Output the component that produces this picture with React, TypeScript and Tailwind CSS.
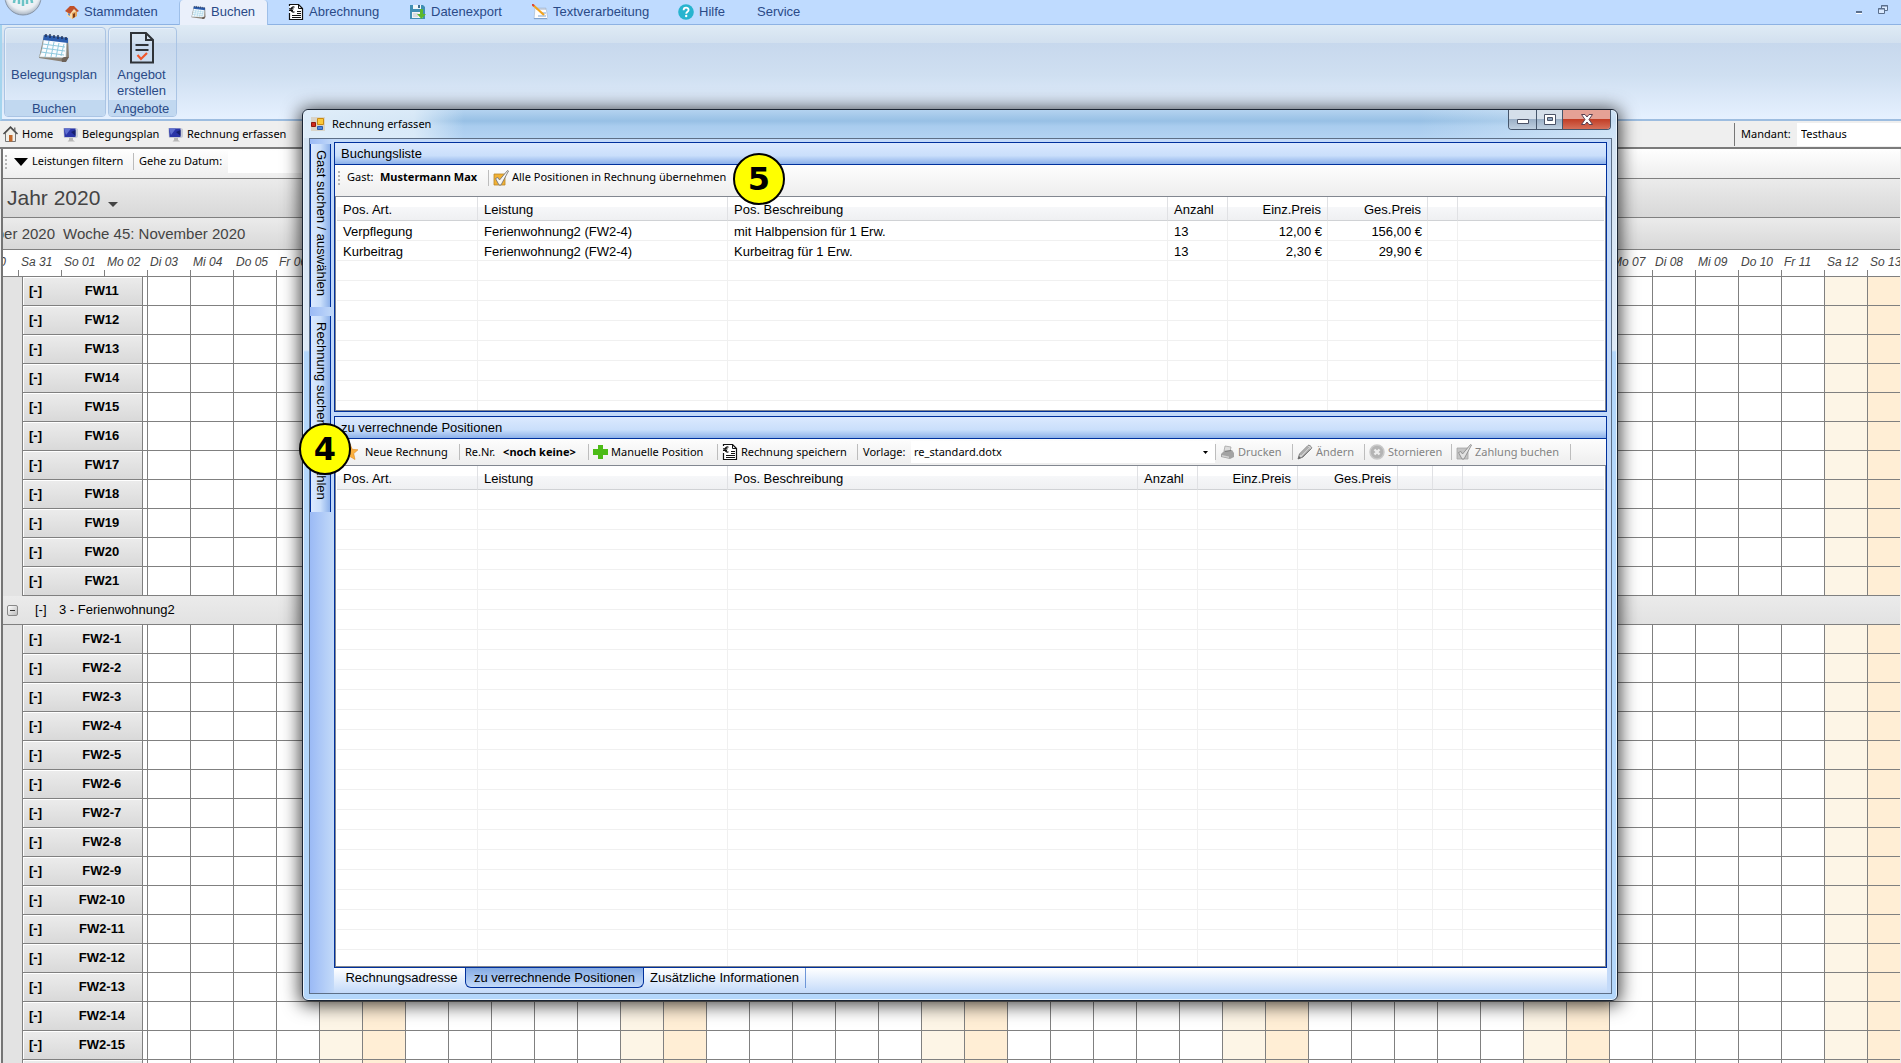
import { useState, type ReactNode } from 'react';

const arial = "font-['Liberation_Sans',Arial,sans-serif]";
const noto = "font-['Noto_Sans','Open_Sans',sans-serif]";

const weekdays = ['So', 'Mo', 'Di', 'Mi', 'Do', 'Fr', 'Sa'];

// the calendar shows every day from 31 October 2020 on
const days = Array.from({ length: 60 }, (_, i) => {
  const d = new Date(2020, 9, 31 + i);
  return { weekday: d.getDay(), label: `${weekdays[d.getDay()]} ${String(d.getDate()).padStart(2, '0')}` };
});

const rooms1 = Array.from({ length: 11 }, (_, i) => `FW${i + 11}`);
const rooms2 = Array.from({ length: 16 }, (_, i) => `FW2-${i + 1}`);

const bookings = [
  ['Verpflegung', 'Ferienwohnung2 (FW2-4)', 'mit Halbpension für 1 Erw.', '13', '12,00 €', '156,00 €'],
  ['Kurbeitrag', 'Ferienwohnung2 (FW2-4)', 'Kurbeitrag für 1 Erw.', '13', '2,30 €', '29,90 €'],
];

const headings = ['Pos. Art.', 'Leistung', 'Pos. Beschreibung', 'Anzahl', 'Einz.Preis', 'Ges.Preis'];

/* ---------- icons ---------- */

function HouseIcon() {
  return (
    <svg width="14" height="14" viewBox="0 0 14 14">
      <path d="M2 6l4-3 6 3v5l-5 3-5-3z" fill="#f6dcae" />
      <path d="M7 8l5-2v5l-5 3z" fill="#e5a35a" />
      <path d="M0 6l5-5 4 0 5 5-2 1-3-3-4 5z" fill="#c0502a" />
      <path d="M8 9l2-1v4l-2 1z" fill="#7c3d1c" />
      <path d="M3 8l2 1v2l-2-1z" fill="#6b8fc4" />
    </svg>
  );
}

function CalendarIcon({ size }: { size: number }) {
  return (
    <svg width={size} height={size} viewBox="0 0 32 32">
      <path d="M6 3l24 3 1 19-4 5-26-4z" fill="#8c8276" />
      <path d="M6 3l23 3-1 20-27-1C4 20 5 12 6 3z" fill="#fafcff" stroke="#9aa" strokeWidth=".6" />
      <path d="M6 3l24 3v5L5 8z" fill="#2d5fb0" />
      <path d="M24 30c-1-3 0-5 4-5l3 0-3 5z" fill="#6d6259" />
      <path d="M5 12l22 3M4 16l23 3M3 20l23 3M11 9L7 25M16 10l-3 15M21 11l-3 14M26 12l-3 12" stroke="#8fc9de" strokeWidth="1" fill="none" />
      <path d="M8 2v3M12 2v4M16 3v3M20 3v4M24 4v3M28 5v3" stroke="#1c2d55" strokeWidth="1.4" />
    </svg>
  );
}

function InvoiceIcon() {
  return (
    <svg width="16" height="16" viewBox="0 0 16 16" fill="none" stroke="#111">
      <path d="M1.500 9v6.500h13V4.500l-4-4H1.500V2" fill="#fff" strokeWidth="1.200" />
      <path d="M10.500.5v4h4M9 7.500h4M9 9.500h4M4 11.500h9M4 13.500h9" />
      <path d="M6.500 3.200C4.500 2.400 3 3.800 3 5.500s1.500 3.100 3.500 2.300M1 4.800h4.500M1 6.500h4" strokeWidth="1.200" />
    </svg>
  );
}

function ExportIcon() {
  return (
    <svg width="16" height="16" viewBox="0 0 16 16">
      <path d="M0 1h13l2 2v12H0z" fill="#3f8fb4" />
      <path d="M3 1h8v4H3z" fill="#eef6fa" />
      <path d="M8 1h2v3H8z" fill="#3f6f8f" />
      <path d="M2 8h11v6H2z" fill="#f3f3f3" />
      <path d="M3 10h5M3 12h5" stroke="#b9c7cf" />
      <path d="M10 5h3v5h3l-4.500 5L7 10h3z" fill="#5cb82c" />
    </svg>
  );
}

function WriteIcon() {
  return (
    <svg width="16" height="16" viewBox="0 0 16 16">
      <path d="M3 4h11l2 11H2z" fill="#fdfdfd" stroke="#a8bcd4" strokeWidth=".7" />
      <path d="M5 4v2M7 4v2M9 4v2M11 4v2M13 4v2" stroke="#8899b5" strokeWidth=".8" />
      <path d="M2 14.500h13M6 12h8M10 9h4" stroke="#7fa3cf" strokeWidth="1" />
      <path d="M1 1l11 10" stroke="#f2a31c" strokeWidth="2.200" />
      <path d="M0 0l2 2" stroke="#d8453a" strokeWidth="2" />
    </svg>
  );
}

function HelpIcon() {
  return (
    <svg width="16" height="16" viewBox="0 0 16 16">
      <circle cx="8" cy="8" r="7.800" fill="#27b4cf" />
      <path d="M5.600 6.200c0-3.400 5-3.200 5-.3 0 1.800-2.400 1.800-2.400 3.800" stroke="#fff" strokeWidth="1.800" fill="none" />
      <circle cx="8.200" cy="12" r="1.200" fill="#fff" />
    </svg>
  );
}

function OfferIcon() {
  return (
    <svg width="24" height="32" viewBox="0 0 24 32" fill="none" stroke="#2f3338" strokeWidth="2">
      <path d="M1 1h15l7 7v22.500H1z" />
      <path d="M16 1v7h7M5.500 13h13M5.500 18h13" />
      <path d="M7.500 23l3.500 4 6-6" stroke="#f0562a" strokeWidth="2.200" />
    </svg>
  );
}

function HomeIcon() {
  return (
    <svg width="15" height="16" viewBox="0 0 15 16">
      <path d="M2.500 7v8.500h10V7l-5-5z" fill="#f1efe9" stroke="#777" />
      <path d="M.5 8l7-7 7 7" fill="none" stroke="#444" strokeWidth="1.400" />
      <path d="M11 1.500h1.500v4L11 4z" fill="#777" />
      <path d="M6 9h3.500v6.500H6z" fill="#c2692c" />
    </svg>
  );
}

function MonitorIcon() {
  return (
    <svg width="15" height="15" viewBox="0 0 15 15">
      <path d="M0 1h13l2 1v8l-2 1H1z" fill="#c8cdd6" />
      <path d="M1 1.500h11.500v8.500H1.500z" fill="#2a35a8" />
      <path d="M1 1.500h7L3 8z" fill="#5f6fd0" />
      <path d="M8 5l4.500-2v6z" fill="#16206f" />
      <path d="M6 11h4v2l2 1.500H4.500L6 13z" fill="#b8b8b8" />
    </svg>
  );
}

function FormIcon() {
  return (
    <svg width="14" height="14" viewBox="0 0 14 14">
      <path d="M0 0h14v14H0z" fill="#d9d4c8" />
      <path d="M.5 5.500h4v4h-4z" fill="#cf2b1d" stroke="#8e1a10" />
      <path d="M6.500 1.500h6v6h-6z" fill="#fbc93a" stroke="#c98a12" />
      <path d="M6.500 9.500h5v3h-5z" fill="#4d87dd" stroke="#2b5eb0" />
    </svg>
  );
}

function CheckIcon({ gray }: { gray?: boolean }) {
  return (
    <svg width="16" height="16" viewBox="0 0 16 16">
      <path d="M1 4h11v11H1z" fill={gray ? '#c4c4c4' : '#f2b134'} stroke={gray ? '#a6a6a6' : '#b8862a'} strokeWidth=".8" />
      <path d="M2.500 8.500l2.500-1 1.500 2.500 8-9.500 1 .5L8 15H6z" fill={gray ? '#e2e2e2' : '#f6f6f6'} stroke={gray ? '#8c8c8c' : '#777'} strokeWidth=".9" />
    </svg>
  );
}

function StarIcon() {
  return (
    <svg width="16" height="16" viewBox="0 0 16 16">
      <path d="M8 0l2.300 5.300 5.700.5-4.300 3.800 1.300 5.900L8 12.500l-5 3 1.300-5.900L0 5.800l5.700-.5z" fill="#fbb040" stroke="#e08a1e" strokeWidth=".6" />
    </svg>
  );
}

function PlusIcon() {
  return (
    <svg width="15" height="14" viewBox="0 0 15 14">
      <path d="M5 0h5v4h5v6h-5v4H5v-4H0V4h5z" fill="#4cbb17" />
    </svg>
  );
}

function PrinterIcon() {
  return (
    <svg width="15" height="14" viewBox="0 0 15 14">
      <path d="M5 1l6 1-1 5-6-1z" fill="#dcdcdc" stroke="#a5a5a5" strokeWidth=".8" />
      <path d="M1 9l3-3 8-1 2 3v4l-4 2-9-2z" fill="#a3a3a3" />
      <path d="M2 10l7 1.500v1.500L2 11.500z" fill="#d2d2d2" />
      <path d="M5 6.500l6-1" stroke="#7d7d7d" />
    </svg>
  );
}

function PencilIcon() {
  return (
    <svg width="16" height="16" viewBox="0 0 16 16">
      <path d="M1 15l1.500-5L11 1.500c1-1 4.500 1.500 3.500 3L6 13z" fill="#d0d0d0" stroke="#7c7c7c" />
      <path d="M3.500 11l8-8M5 13l8-8.500" stroke="#8c8c8c" />
      <path d="M1 15l1-3 2 2z" fill="#666" />
    </svg>
  );
}

function CancelIcon() {
  return (
    <svg width="16" height="16" viewBox="0 0 16 16">
      <circle cx="8" cy="8" r="7" fill="#b4b4b4" stroke="#c9c9c9" strokeWidth="1.500" />
      <path d="M5.500 5.500l5 5M10.500 5.500l-5 5" stroke="#ededed" strokeWidth="2.400" />
    </svg>
  );
}

function Grip() {
  return (
    <svg width="3" height="14" viewBox="0 0 3 14" fill="#b5b5b5">
      <path d="M0 0h2v2H0zM0 4h2v2H0zM0 8h2v2H0zM0 12h2v2H0z" />
    </svg>
  );
}

/* ---------- main window ---------- */

function RibbonTabs() {
  const tab = 'flex h-6 items-center gap-[5px] pb-px pl-3';
  return (
    <nav className="flex h-[25px] items-start border-b border-[#8db2e3] bg-[#bfdbff] text-[13px] text-[#2a4a87]">
      <div className="relative w-[53px] shrink-0 self-stretch">
        <svg className="absolute left-[4px] top-[-22px] z-10" width="38" height="38" viewBox="0 0 38 38">
          <defs>
            <radialGradient id="orb" cx=".5" cy=".4" r=".6">
              <stop offset="0" stopColor="#ffffff" />
              <stop offset=".75" stopColor="#e9eef3" />
              <stop offset="1" stopColor="#a8b4c2" />
            </radialGradient>
          </defs>
          <circle cx="19" cy="19" r="18" fill="url(#orb)" stroke="#8795a8" />
          <path d="M19 10v18M15 18v8M23 18v8M10 25c0-4 2-6 4-8M28 25c0-4-2-6-4-8" stroke="#6cc3c6" strokeWidth="2.500" fill="none" />
        </svg>
      </div>
      <button className={`${tab} w-[126px]`}><HouseIcon />Stammdaten</button>
      <button className={`${tab} mr-2 h-[25px]! w-[89px] rounded-t border-x border-[#9ebfe8] bg-[#eaf0fb] pl-[11px]!`}>
        <CalendarIcon size={15} />Buchen
      </button>
      <button className={`${tab} w-[122px]`}><InvoiceIcon />Abrechnung</button>
      <button className={`${tab} w-[122px]`}><ExportIcon />Datenexport</button>
      <button className={`${tab} w-[146px]`}><WriteIcon />Textverarbeitung</button>
      <button className={`${tab} w-[79px]`}><HelpIcon />Hilfe</button>
      <button className={tab}>Service</button>
      <div className="ml-auto flex items-center gap-4 pr-[13px] pt-[5px]">
        <button aria-label="Minimieren">
          <svg width="6" height="10" viewBox="0 0 6 10"><path d="M0 6h6v2H0z" fill="#5b6f8c" /><path d="M0 8h6v1H0z" fill="#fff" /></svg>
        </button>
        <button aria-label="Wiederherstellen">
          <svg width="10" height="10" viewBox="0 0 10 10" fill="#dcebff" stroke="#5b6f8c">
            <path d="M3.500.5h6v5h-6zM3 1h7" />
            <path d="M.5 3.500h6v5h-6zM0 4h7" />
          </svg>
        </button>
      </div>
    </nav>
  );
}

function RibbonGroup({ label, caption, icon, className }: { label: string; caption: string; icon: ReactNode; className: string }) {
  return (
    <div className={`flex h-[90px] flex-col overflow-hidden rounded border border-[#aac4e4] shadow-[inset_1px_1px_0_#e6effa] ${className}`}>
      <button className="flex flex-1 flex-col items-center gap-[3px] pt-1 pr-[2px] text-[13px] leading-4">
        {icon}
        <span>{label}</span>
      </button>
      <div className="h-4 bg-[#c1d8f0] pr-[2px] text-center text-[13px] leading-[18px]">{caption}</div>
    </div>
  );
}

function Ribbon() {
  return (
    <div className="flex h-24 gap-[2px] border-b-2 border-l-2 border-b-[#9dbde0] border-l-[#a5d5ee] bg-[linear-gradient(#dfebf5_0,#d2e0ef_18px,#c7d8ed_18px,#cfdff1_50px,#e6f1ff_94px)] pl-[2px] pt-[2px] text-[#2a4a87]">
      <RibbonGroup className="w-[102px]" caption="Buchen" label="Belegungsplan" icon={<CalendarIcon size={32} />} />
      <RibbonGroup className="w-[69px]" caption="Angebote" label="Angebot erstellen" icon={<OfferIcon />} />
    </div>
  );
}

function Breadcrumb() {
  const item = 'flex items-center gap-1 whitespace-nowrap';
  return (
    <div className={`flex h-[28px] items-center border-b-2 border-[#7b7b7b] bg-[#efefef] pl-[3px] text-[11px] text-black ${noto}`}>
      <a href="#home" className={`${item} w-[60px]`}><HomeIcon />Home</a>
      <a href="#belegungsplan" className={`${item} w-[105px]`}><MonitorIcon />Belegungsplan</a>
      <a href="#rechnung" className={item}><MonitorIcon />Rechnung erfassen</a>
      <div className="ml-auto flex items-center border-l border-[#777] pl-[6px]">
        <label htmlFor="mandant" className="w-[56px]">Mandant:</label>
        <select id="mandant" className="h-[23px] w-[104px] appearance-none bg-white pl-1">
          <option>Testhaus</option>
        </select>
      </div>
    </div>
  );
}

function CalendarToolbar() {
  return (
    <div className={`flex h-[30px] shrink-0 items-center border-b border-[#808080] bg-linear-to-b from-white to-[#eeeeee] pb-1 pl-[2px] text-[11px] text-black ${noto}`}>
      <Grip />
      <button className="flex w-[125px] items-center gap-1 pl-[6px] whitespace-nowrap">
        <svg width="14" height="8" viewBox="0 0 14 8"><path d="M0 0h14L7 8z" /></svg>
        Leistungen filtern
      </button>
      <label htmlFor="datum" className="w-[95px] border-l border-[#bbb] pl-[5px] whitespace-nowrap">Gehe zu Datum:</label>
      <input id="datum" className="h-[22px] w-[200px] bg-white" />
    </div>
  );
}

function RoomRow({ name }: { name: string }) {
  return (
    <tr className="h-[29px]">
      <td className="bg-[#e3e3e3]" />
      <th className="border-x border-b border-[#808080] bg-linear-to-b from-[#ececec] to-[#d9d9d9] p-0 shadow-[inset_1px_1px_0_#fff]">
        <div className="flex text-[13px] font-bold leading-5">
          <span className="w-10 pl-[6px] text-left">[-]</span>
          <span className="w-20 pr-px text-center whitespace-nowrap">{name}</span>
        </div>
      </th>
      <td className="border-b border-[#808080]" />
      {days.slice(3).map((d, i) => (
        <td
          key={i}
          className={`border-b border-l border-[#808080] ${
            d.weekday === 6 ? 'bg-[#fdf5e6]' : d.weekday === 0 ? 'bg-[#ffeed5]' : 'bg-white'
          }`}
        />
      ))}
    </tr>
  );
}

function Calendar() {
  const [open, setOpen] = useState(true);

  return (
    <section className="ml-px mr-px flex min-h-0 flex-1 flex-col overflow-hidden border-l-2 border-[#757575] bg-white">
      <CalendarToolbar />
      <button className="flex h-[39px] shrink-0 items-center gap-2 border-b border-[#808080] bg-linear-to-b from-[#ebebeb] to-[#d8d8d8] pl-1 text-[21px] text-[#444]">
        Jahr 2020
        <svg className="mt-3" width="10" height="5" viewBox="0 0 10 5"><path d="M0 0h10L5 5z" fill="#444" /></svg>
      </button>
      <div className="flex h-8 shrink-0 items-center border-b border-[#808080] bg-linear-to-b from-[#ebebeb] to-[#d8d8d8] pt-[2px] text-[15px] text-[#444]">
        <div className="flex w-[60px] shrink-0 justify-end overflow-hidden whitespace-nowrap pr-2">Woche 44: Oktober 2020</div>
        <div>Woche 45: November 2020</div>
      </div>
      <div className="flex h-[27px] shrink-0 overflow-hidden border-b border-[#808080] text-[12px] italic text-[#444]">
        <div className="flex w-[15px] shrink-0 items-center justify-end overflow-hidden whitespace-nowrap pr-[12px] pb-[2px]">Fr 30</div>
        {days.map((d) => (
          <div
            key={d.label + d.weekday}
            className="flex w-[43px] shrink-0 items-center whitespace-nowrap bg-[linear-gradient(#808080,#808080)] bg-[length:1px_6px] bg-[position:left_bottom] bg-no-repeat pb-[2px] pl-[3px]"
          >
            {d.label}
          </div>
        ))}
      </div>
      <table className="w-[2595px] table-fixed border-separate border-spacing-0 text-black">
        <colgroup>
          <col className="w-[19px]" />
          <col className="w-[121px]" />
          <col className="w-[4px]" />
          {days.slice(3).map((_, i) => <col key={i} className="w-[43px]" />)}
        </colgroup>
        <tbody>
          {rooms1.map((r) => <RoomRow key={r} name={r} />)}
          <tr className="h-[29px]">
            <th colSpan={60} className="border-b border-[#808080] bg-linear-to-b from-[#ebebeb] to-[#e2e2e2] p-0 text-left text-[13px] font-normal">
              <div className="flex items-center pl-1">
                <button
                  onClick={() => setOpen(!open)}
                  aria-label="Gruppe umschalten"
                  className="mr-[17px] flex size-[11px] items-center justify-center rounded-xs border border-[#888] bg-linear-to-br from-white to-[#bbb]"
                >
                  <span className="h-px w-[5px] bg-[#333]" />
                </button>
                <span className="w-6">[-]</span>3 - Ferienwohnung2
              </div>
            </th>
          </tr>
          {open && rooms2.map((r) => <RoomRow key={r} name={r} />)}
        </tbody>
      </table>
    </section>
  );
}

/* ---------- dialog ---------- */

function PanelHeader({ children }: { children: ReactNode }) {
  return (
    <h2 className="h-[22px] shrink-0 border-b border-[#00309c] bg-[linear-gradient(#dbe9fe,#cadffb_60%,#8db1ea)] pl-[6px] text-[13px] leading-[21px]">
      {children}
    </h2>
  );
}

type TableProps = { cols: string[]; rows: string[][]; rowCount: number };

function PositionTable({ cols, rows, rowCount }: TableProps) {
  const filled = [...rows, ...Array.from({ length: rowCount - rows.length }, () => [] as string[])];
  return (
    <div className="min-h-0 flex-1 overflow-hidden border border-[#828790] bg-white px-px pb-px">
      <table className="w-full table-fixed border-separate border-spacing-0 text-[13px]">
        <colgroup>
          {cols.map((c, i) => <col key={i} className={c} />)}
          <col />
        </colgroup>
        <thead>
          <tr className="h-6">
            {[...cols, ''].map((_, i) => (
              <th
                key={i}
                className={`border-b border-[#d0d2d5] bg-[linear-gradient(#fff_45%,#f6f7f9_45%,#eff0f2)] pt-[3px] pr-[6px] pb-0 pl-[6px] leading-5 font-normal ${
                  i < cols.length ? 'border-r border-r-[#e0e1e4]' : ''
                } ${i === 4 || i === 5 ? 'text-right' : 'text-left'}`}
              >
                {headings[i]}
              </th>
            ))}
          </tr>
        </thead>
        <tbody>
          {filled.map((row, r) => (
            <tr key={r} className="h-5">
              {[...cols, ''].map((_, i) => (
                <td
                  key={i}
                  className={`border-b border-[#f0f0f0] pt-[3px] pr-[5px] pb-0 pl-[6px] leading-4 whitespace-nowrap ${
                    i < cols.length ? 'border-r' : ''
                  } ${i === 4 || i === 5 ? 'text-right' : 'text-left'}`}
                >
                  {row[i]}
                </td>
              ))}
            </tr>
          ))}
        </tbody>
      </table>
    </div>
  );
}

function ToolButton({ icon, label, className, disabled }: { icon: ReactNode; label: string; className: string; disabled?: boolean }) {
  return (
    <button
      disabled={disabled}
      className={`flex h-4 items-center gap-[3px] border-l border-[#bdbdbd] pl-1 whitespace-nowrap disabled:text-[#838383] ${className}`}
    >
      {icon}
      {label}
    </button>
  );
}

const toolbar = `flex shrink-0 items-center bg-linear-to-b from-[#fdfdfd] to-[#eeeeee] pl-[3px] text-[11px] ${noto}`;

function BookingPanel() {
  return (
    <section className="flex h-[270px] shrink-0 flex-col border border-[#00309c]">
      <PanelHeader>Buchungsliste</PanelHeader>
      <div className={`${toolbar} h-[31px] pb-[6px]`}>
        <Grip />
        <span className="w-[33px] pl-[6px]">Gast:</span>
        <b className="w-[114px] pl-[6px] whitespace-nowrap">Mustermann Max</b>
        <ToolButton className="" icon={<CheckIcon />} label="Alle Positionen in Rechnung übernehmen" />
      </div>
      <PositionTable
        cols={['w-[141px]', 'w-[250px]', 'w-[440px]', 'w-[60px]', 'w-[100px]', 'w-[100px]', 'w-[30px]']}
        rows={bookings}
        rowCount={10}
      />
    </section>
  );
}

function InvoicePanel() {
  return (
    <section className="flex min-h-0 flex-1 flex-col border border-[#00309c]">
      <PanelHeader>zu verrechnende Positionen</PanelHeader>
      <div className={`${toolbar} h-[26px]`}>
        <button className="flex w-[121px] items-center gap-[7px] pl-1 whitespace-nowrap"><StarIcon />Neue Rechnung</button>
        <div className="flex h-4 w-[129px] items-center gap-2 border-l border-[#bdbdbd] pl-[5px] whitespace-nowrap">
          <span>Re.Nr.</span>
          <b>&lt;noch keine&gt;</b>
        </div>
        <ToolButton className="w-[129px]" icon={<PlusIcon />} label="Manuelle Position" />
        <ToolButton className="w-[140px]" icon={<InvoiceIcon />} label="Rechnung speichern" />
        <label htmlFor="vorlage" className="h-4 w-[54px] border-l border-[#bdbdbd] pl-[5px] leading-4">Vorlage:</label>
        <div className="flex h-[22px] w-[304px] items-center bg-white pr-[7px]">
          <select id="vorlage" className="h-full flex-1 appearance-none bg-white pl-[3px]">
            <option>re_standard.dotx</option>
          </select>
          <svg width="5" height="3" viewBox="0 0 5 3"><path d="M0 0h5L2.500 3z" /></svg>
        </div>
        <ToolButton className="w-[77px]" icon={<PrinterIcon />} label="Drucken" disabled />
        <ToolButton className="w-[72px]" icon={<PencilIcon />} label="Ändern" disabled />
        <ToolButton className="w-[87px]" icon={<CancelIcon />} label="Stornieren" disabled />
        <ToolButton className="w-[120px] border-r" icon={<CheckIcon gray />} label="Zahlung buchen" disabled />
      </div>
      <PositionTable
        cols={['w-[141px]', 'w-[250px]', 'w-[410px]', 'w-[60px]', 'w-[100px]', 'w-[100px]', 'w-[35px]', 'w-[30px]']}
        rows={[]}
        rowCount={60}
      />
    </section>
  );
}

function WindowButtons() {
  const base = 'flex h-full items-center justify-center bg-[linear-gradient(#d5dfea_45%,#98adc4_45%,#c0d0e0)]';
  return (
    <div className="mr-[5px] flex h-5 overflow-hidden rounded-b border-x border-b border-[#46566b]">
      <button aria-label="Minimieren" className={`${base} w-[27px]`}>
        <svg className="mt-1" width="12" height="5" viewBox="0 0 12 5"><path d="M.5.5h11v4H.5z" fill="#fff" stroke="#4a5266" /></svg>
      </button>
      <button aria-label="Maximieren" className={`${base} w-[27px] border-x border-[#46566b]`}>
        <svg width="12" height="11" viewBox="0 0 12 11" fill="#fff" stroke="#4a5266">
          <path d="M.5.5h11v10H.5z" />
          <path d="M3.500 3.500h5v3h-5z" fill="#8da3bd" />
        </svg>
      </button>
      <button aria-label="Schließen" className="flex h-full w-[47px] items-center justify-center bg-[linear-gradient(#e5a195_45%,#c03a22_45%,#d6705a)]">
        <svg width="12" height="11" viewBox="0 0 12 11">
          <path d="M.5.5H4l2 2.500L8 .5h3.500l-3.500 5 3.500 5H8L6 8l-2 2.500H.5l3.500-5z" fill="#fff" stroke="#5a4050" />
        </svg>
      </button>
    </div>
  );
}

function StepBadge({ n, className }: { n: number; className: string }) {
  return (
    <div
      className={`absolute flex size-[52px] items-center justify-center rounded-full border-2 border-black bg-[#ffff00] font-['DejaVu_Sans',sans-serif] text-[32px] font-bold leading-8 ${className}`}
    >
      {n}
    </div>
  );
}

function InvoiceDialog() {
  const sideTab =
    'flex w-[21px] items-center rounded-none border-y border-r border-[#00309c] bg-linear-to-r from-[#dbe9fe] via-[#cadffb] to-[#8db1ea] pt-[6px] text-[13px] leading-5 whitespace-nowrap [writing-mode:vertical-rl]';
  return (
    <div
      role="dialog"
      aria-label="Rechnung erfassen"
      className="absolute top-[109px] right-[283px] bottom-[62px] left-[302px] flex flex-col rounded-md border border-[#1b2533] bg-[linear-gradient(#d3e3f3_0,#dde9f6_240px,#b4d7fb_242px)] text-black shadow-[inset_0_0_0_1px_#eaf4fd,0_2px_18px_2px_rgba(0,0,0,0.75)]"
    >
      <header className="mx-px flex h-[28px] shrink-0 items-start rounded-t-md bg-[linear-gradient(90deg,rgba(228,240,250,0.9)_0,rgba(228,240,250,0.8)_110px,transparent_160px,transparent_85%,rgba(228,240,250,0.6)),linear-gradient(#b4d3f0,#97c0e5_11px,#a9ccee_16px,#b3d3f3)]">
        <h1 className={`flex h-full items-center gap-[7px] pl-[7px] text-[11px] ${noto}`}>
          <FormIcon />
          Rechnung erfassen
        </h1>
        <div className="ml-auto"><WindowButtons /></div>
      </header>
      <div className="mr-[5px] mb-[6px] ml-[6px] flex min-h-0 flex-1 border border-[#5d6f87] bg-[#c3daf9]">
        <div className="flex w-6 shrink-0 flex-col items-start gap-[9px] bg-linear-to-r from-[#9bbaf5] to-[#c3daf9] pt-[5px]">
          <button className={`${sideTab} h-[163px]`}>Gast suchen / auswählen</button>
          <button className={`${sideTab} h-[196px]`}>Rechnung suchen / auswählen</button>
        </div>
        <div className="flex min-w-0 flex-1 flex-col pt-[3px] pr-1">
          <BookingPanel />
          <div className="h-1 shrink-0" />
          <InvoicePanel />
          <div className="flex h-[25px] shrink-0 items-start bg-linear-to-b from-white to-[#c3daf9] text-[13px] leading-5">
            <button className="w-[131px] pl-1">Rechnungsadresse</button>
            <button className="h-5 w-[179px] rounded-b-md border-x border-b border-[#00309c] bg-linear-to-b from-[#85abe4] to-[#c3daf9]">
              zu verrechnende Positionen
            </button>
            <button className="w-[162px] border-r border-[#6d96d8]">Zusätzliche Informationen</button>
          </div>
        </div>
      </div>
      <StepBadge n={4} className="top-[313px] left-[-4px]" />
      <StepBadge n={5} className="top-[43px] left-[430px]" />
    </div>
  );
}

export default function App() {
  return (
    <div className={`relative flex h-screen flex-col overflow-hidden bg-[#efefef] ${arial}`}>
      <RibbonTabs />
      <Ribbon />
      <Breadcrumb />
      <Calendar />
      <InvoiceDialog />
    </div>
  );
}
